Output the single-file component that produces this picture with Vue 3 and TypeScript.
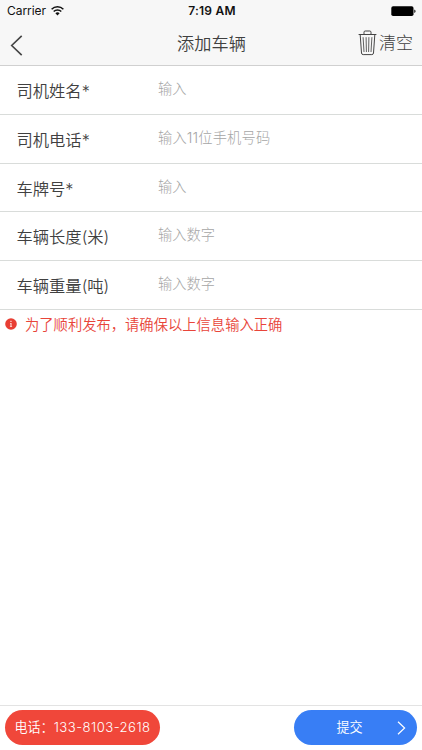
<script setup lang="ts">
import { reactive } from 'vue'

interface Field {
  key: string
  label: string
  hint: string
  type: string
}

const fields: Field[] = [
  { key: 'name', label: '司机姓名*', hint: '输入', type: 'text' },
  { key: 'phone', label: '司机电话*', hint: '输入11位手机号码', type: 'tel' },
  { key: 'plate', label: '车牌号*', hint: '输入', type: 'text' },
  { key: 'length', label: '车辆长度(米)', hint: '输入数字', type: 'text' },
  { key: 'weight', label: '车辆重量(吨)', hint: '输入数字', type: 'text' },
]

const form = reactive<Record<string, string>>({})

function clearForm(): void {
  for (const field of fields) form[field.key] = ''
}
</script>

<template>
  <div class="screen">
    <header class="top">
      <div class="status">
        <div class="carrier">
          <span>Carrier</span>
          <svg class="wifi" width="13" height="10" viewBox="0 0 13 10" fill="none" stroke="#111" stroke-width="1.5">
            <path d="M.6 3.3a8.3 8.3 0 0 1 11.8 0M2.7 5.6a5.3 5.3 0 0 1 7.6 0" />
            <path d="M4.4 7.2a3 3 0 0 1 4.2 0L6.5 9.4z" fill="#111" stroke="none" />
          </svg>
        </div>
        <span class="time">7:19 AM</span>
        <svg class="battery" width="26" height="11" viewBox="0 0 26 11">
          <rect x="1.3" y=".3" width="22.2" height="9.7" rx="1.8" fill="#000" />
          <path d="M24.3 3.6c1.7.5 1.7 2.8 0 3.3z" fill="#000" />
        </svg>
      </div>
      <nav class="nav">
        <button class="back" aria-label="返回">
          <svg width="13" height="21" viewBox="0 0 13 21" fill="none" stroke="#444" stroke-width="1.6">
            <path d="M11.7.9 1.7 10.5l10 9.6" />
          </svg>
        </button>
        <h1 class="title">添加车辆</h1>
        <button class="clear" @click="clearForm">
          <svg width="19" height="26" viewBox="0 0 19 26" fill="none" stroke="#444" stroke-width="1">
            <path d="M.6 4.5h17.8M6 4.3V2.2Q6 1 7.2 1h4.6Q13 1 13 2.2v2.1" />
            <path d="M2.2 4.8 3.5 23q.1 1.6 1.7 1.6h8.6q1.6 0 1.7-1.6l1.3-18.2" />
            <path d="m5.1 7.2.9 14.8M8.1 7.2l.3 14.8M10.9 7.2l-.3 14.8M13.9 7.2l-.9 14.8" stroke-width=".85" />
          </svg>
          <span>清空</span>
        </button>
      </nav>
    </header>

    <main class="content">
      <label v-for="field in fields" :key="field.key" class="row">
        <span class="label">{{ field.label }}</span>
        <input v-model="form[field.key]" class="input" :type="field.type" :placeholder="field.hint" />
      </label>
      <p class="notice">
        <svg width="12" height="12" viewBox="0 0 12 12">
          <circle cx="6" cy="6" r="5.8" fill="#e83e33" />
          <path d="M5.3 2.8h1.3V4H5.3zM5 5h1.6v3.3h.5V9H4.9v-.7h.5V5.7H5z" fill="#ffd5cf" />
        </svg>
        <span>为了顺利发布，请确保以上信息输入正确</span>
      </p>
    </main>

    <footer class="footer">
      <button class="pill call">电话：<span class="digits">133-8103-2618</span></button>
      <button class="pill submit">
        <span>提交</span>
        <svg class="next" width="9" height="14" viewBox="0 0 9 14" fill="none" stroke="#fff" stroke-width="1.2">
          <path d="m1 .8 6.6 6.2L1 13.2" />
        </svg>
      </button>
    </footer>
  </div>
</template>

<style>
body {
  margin: 0;
  background: #fff;
}
</style>

<style scoped>
.screen {
  display: flex;
  flex-direction: column;
  box-sizing: border-box;
  width: 100%;
  height: 100vh;
  overflow: hidden;
  background: #fff;
  color: #404040;
  font-family: Inter, 'Noto Sans CJK SC', sans-serif;
  font-weight: 350;
}

button {
  padding: 0;
  border: 0;
  background: none;
  color: inherit;
  font: inherit;
}

svg {
  display: block;
  flex: none;
}

.top {
  flex: none;
  box-sizing: border-box;
  height: 66px;
  border-bottom: 1px solid #d0d0d0;
  background: #f7f7f7;
}

.status {
  display: grid;
  grid-template-columns: 1fr auto 1fr;
  align-items: center;
  height: 22px;
  padding: 0 6px 0 7px;
  color: #111;
  font-size: 12px;
  line-height: 22px;
}

.carrier {
  display: flex;
  align-items: center;
  gap: 5px;
  font-weight: 400;
  letter-spacing: -0.05px;
}

.time {
  padding-left: 1px;
  font-weight: 600;
  letter-spacing: 0.25px;
}

.battery {
  justify-self: end;
}

.nav {
  display: grid;
  grid-template-columns: 1fr auto 1fr;
  align-items: center;
  height: 43px;
  padding: 0 9px 0 10px;
}

.back {
  justify-self: start;
  padding-top: 3px;
}

.title {
  margin: 0;
  font-size: 17.2px;
  font-weight: 350;
  line-height: 43px;
}

.clear {
  display: flex;
  align-items: center;
  justify-self: end;
  gap: 1.6px;
  font-size: 17px;
  font-weight: 300;
  line-height: 43px;
}

.clear svg {
  position: relative;
  top: -1px;
}

.content {
  flex: 1;
}

.row {
  display: grid;
  grid-template-columns: 141.5px 1fr;
  box-sizing: border-box;
  height: 48.8px;
  padding-left: 16.5px;
  border-bottom: 1px solid #d9dcda;
}

.label {
  padding-top: 1px;
  font-size: 16.3px;
  line-height: 49px;
}

.input {
  height: 45px;
  padding: 0;
  border: 0;
  outline: 0;
  background: none;
  color: #444;
  font: inherit;
  font-size: 14.25px;
}

.input[type='tel']::placeholder {
  letter-spacing: 0.15px;
}

.input::placeholder {
  color: #a6a6a6;
  font-weight: 300;
  opacity: 1;
}

.notice {
  display: flex;
  align-items: center;
  gap: 8px;
  margin: 0;
  padding-left: 5px;
  color: #e8453a;
  font-size: 14.3px;
  line-height: 29px;
}

.footer {
  display: flex;
  flex: none;
  align-items: flex-start;
  justify-content: space-between;
  box-sizing: border-box;
  height: 45px;
  padding: 4px 5px 0;
  border-top: 1px solid #e3e3e3;
}

.pill {
  height: 35px;
  border-radius: 17.5px;
  color: #fff;
  font-size: 13.1px;
  line-height: 35px;
  white-space: nowrap;
}

.call {
  width: 155px;
  background: #f0473a;
}

.digits {
  letter-spacing: 0.48px;
}

.submit {
  display: grid;
  grid-template-columns: 1fr auto;
  align-items: center;
  width: 123px;
  padding-right: 11px;
  background: #387ef5;
}

.submit span {
  padding-left: 8px;
}
</style>
